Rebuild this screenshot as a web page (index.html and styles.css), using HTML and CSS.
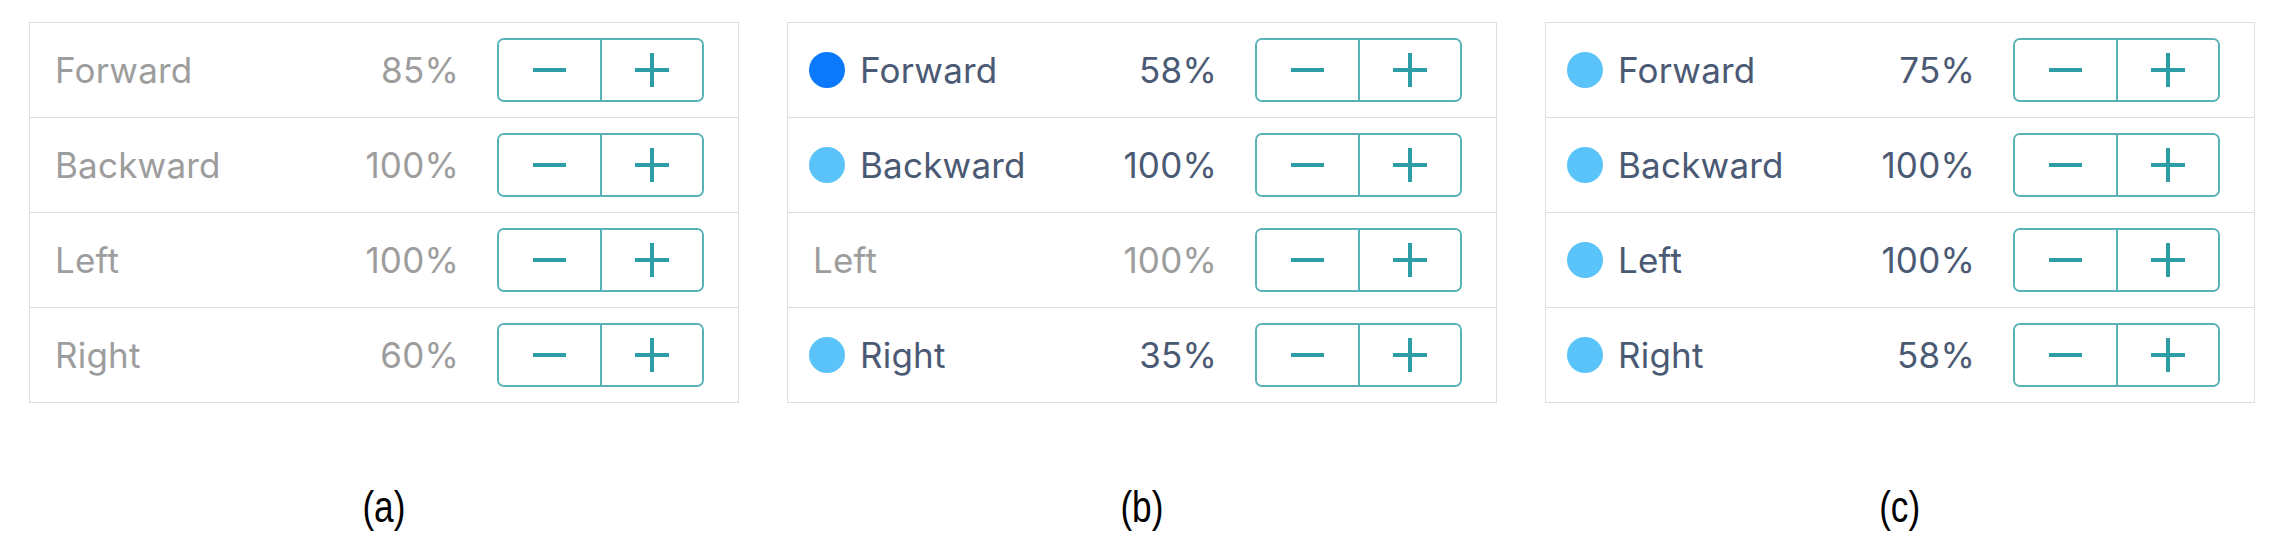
FILE: index.html
```html
<!DOCTYPE html>
<html>
<head>
<meta charset="utf-8">
<link rel="stylesheet" href="styles.css">
</head>
<body>
<div class="figures">
  <figure class="fig">
    <div class="panel">
      <div class="row off"><span class="name">Forward</span><span class="pct">85%</span><div class="stepper"><button class="step"><span class="minus"></span></button><button class="step"><span class="plus"></span></button></div></div>
      <div class="row off"><span class="name">Backward</span><span class="pct">100%</span><div class="stepper"><button class="step"><span class="minus"></span></button><button class="step"><span class="plus"></span></button></div></div>
      <div class="row off"><span class="name">Left</span><span class="pct">100%</span><div class="stepper"><button class="step"><span class="minus"></span></button><button class="step"><span class="plus"></span></button></div></div>
      <div class="row off"><span class="name">Right</span><span class="pct">60%</span><div class="stepper"><button class="step"><span class="minus"></span></button><button class="step"><span class="plus"></span></button></div></div>
    </div>
    <figcaption class="caption"><span class="cap-text">(a)</span></figcaption>
  </figure>
  <figure class="fig">
    <div class="panel">
      <div class="row on"><span class="dot dot-active"></span><span class="name">Forward</span><span class="pct">58%</span><div class="stepper"><button class="step"><span class="minus"></span></button><button class="step"><span class="plus"></span></button></div></div>
      <div class="row on"><span class="dot"></span><span class="name">Backward</span><span class="pct">100%</span><div class="stepper"><button class="step"><span class="minus"></span></button><button class="step"><span class="plus"></span></button></div></div>
      <div class="row off"><span class="name">Left</span><span class="pct">100%</span><div class="stepper"><button class="step"><span class="minus"></span></button><button class="step"><span class="plus"></span></button></div></div>
      <div class="row on"><span class="dot"></span><span class="name">Right</span><span class="pct">35%</span><div class="stepper"><button class="step"><span class="minus"></span></button><button class="step"><span class="plus"></span></button></div></div>
    </div>
    <figcaption class="caption"><span class="cap-text">(b)</span></figcaption>
  </figure>
  <figure class="fig">
    <div class="panel">
      <div class="row on"><span class="dot"></span><span class="name">Forward</span><span class="pct">75%</span><div class="stepper"><button class="step"><span class="minus"></span></button><button class="step"><span class="plus"></span></button></div></div>
      <div class="row on"><span class="dot"></span><span class="name">Backward</span><span class="pct">100%</span><div class="stepper"><button class="step"><span class="minus"></span></button><button class="step"><span class="plus"></span></button></div></div>
      <div class="row on"><span class="dot"></span><span class="name">Left</span><span class="pct">100%</span><div class="stepper"><button class="step"><span class="minus"></span></button><button class="step"><span class="plus"></span></button></div></div>
      <div class="row on"><span class="dot"></span><span class="name">Right</span><span class="pct">58%</span><div class="stepper"><button class="step"><span class="minus"></span></button><button class="step"><span class="plus"></span></button></div></div>
    </div>
    <figcaption class="caption"><span class="cap-text">(c)</span></figcaption>
  </figure>
</div>
</body>
</html>
```
FILE: styles.css
```css
html, body {
  margin: 0;
  padding: 0;
  background: #ffffff;
}

body {
  font-family: "Inter", "Liberation Sans", sans-serif;
}

.figures {
  display: flex;
  gap: 48px;
  padding: 22px 0 0 29px;
}

.fig {
  margin: 0;
  width: 710px;
  display: flex;
  flex-direction: column;
}

.panel {
  border: 1px solid #dedede;
  border-bottom: none;
}

.row {
  height: 94px;
  border-bottom: 1px solid #dedede;
  display: flex;
  align-items: center;
  padding: 0 34px 0 21px;
  font-size: 35px;
  letter-spacing: 0.2px;
}

.row.off {
  color: #9d9d9d;
}

.row.on {
  color: #4b5a74;
}

.row.off .name {
  margin-left: 4px;
}

.dot {
  width: 36px;
  height: 36px;
  border-radius: 50%;
  background: #5ac4fa;
  margin-right: 15px;
  flex: none;
}

.dot-active {
  background: #0a79fb;
}

.name {
  flex: 1;
}

.pct {
  width: 140px;
  text-align: right;
  margin-right: 38px;
}

.stepper {
  display: flex;
  width: 207px;
  height: 64px;
  box-sizing: border-box;
  border: 2px solid #58b2b8;
  border-radius: 7px;
  overflow: hidden;
}

.step {
  flex: 1;
  display: flex;
  align-items: center;
  justify-content: center;
  background: #fff;
  border: none;
  padding: 0;
  margin: 0;
}

.step + .step {
  border-left: 2px solid #58b2b8;
}

.minus {
  display: block;
  width: 33px;
  height: 4px;
  background: #2d9ea5;
}

.plus {
  display: block;
  width: 34px;
  height: 34px;
  background:
    linear-gradient(#2d9ea5, #2d9ea5) center / 100% 4px no-repeat,
    linear-gradient(#2d9ea5, #2d9ea5) center / 4px 100% no-repeat;
}

.caption {
  margin-top: 79px;
  text-align: center;
  line-height: 50px;
  height: 50px;
}

.cap-text {
  display: inline-block;
  font-family: "Liberation Sans", sans-serif;
  font-size: 44px;
  color: #000;
  transform: scaleX(0.8);
}
```
